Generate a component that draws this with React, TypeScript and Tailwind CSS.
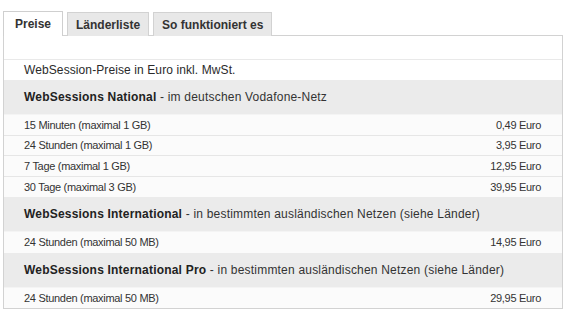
import React from "react";

type Row = { label: string; price: string };
type Group = { title: string; note: string; rows: Row[] };

const groups: Group[] = [
  {
    title: "WebSessions National",
    note: " - im deutschen Vodafone-Netz",
    rows: [
      { label: "15 Minuten (maximal 1 GB)", price: "0,49 Euro" },
      { label: "24 Stunden (maximal 1 GB)", price: "3,95 Euro" },
      { label: "7 Tage (maximal 1 GB)", price: "12,95 Euro" },
      { label: "30 Tage (maximal 3 GB)", price: "39,95 Euro" },
    ],
  },
  {
    title: "WebSessions International",
    note: " - in bestimmten ausländischen Netzen (siehe Länder)",
    rows: [{ label: "24 Stunden (maximal 50 MB)", price: "14,95 Euro" }],
  },
  {
    title: "WebSessions International Pro",
    note: " - in bestimmten ausländischen Netzen (siehe Länder)",
    rows: [{ label: "24 Stunden (maximal 50 MB)", price: "29,95 Euro" }],
  },
];

function Tab({ label, active }: { label: string; active?: boolean }) {
  return active ? (
    <div className="flex h-[25px] items-center border border-b-0 border-[#cfcfcf] bg-white px-[11px] pb-px text-[12px] font-bold text-[#333]">
      {label}
    </div>
  ) : (
    <div className="flex h-[24px] items-center border border-b-0 border-[#d2d2d2] bg-[#e8e8e8] px-[8px] text-[12px] font-bold text-[#333]">
      {label}
    </div>
  );
}

export default function App() {
  return (
    <div className="h-[319px] w-[567px] bg-white font-['Liberation_Sans',Arial,sans-serif] text-[#333]">
      <div className="pl-[3px] pr-[4px] pt-[11px]">
        <div className="relative z-10 -mb-px flex items-end gap-[4px]">
          <Tab label="Preise" active />
          <Tab label="Länderliste" />
          <Tab label="So funktioniert es" />
        </div>
        <div className="border border-[#d2d2d2] bg-white">
          <div className="h-[24px] border-b border-[#e9e9e9]" />
          <div className="flex h-[20px] items-center pl-[20px] text-[12px] tracking-[0.1px] text-[#2a2a2a]">
            WebSession-Preise in Euro inkl. MwSt.
          </div>
          {groups.map((g) => (
            <div key={g.title}>
              <div className="flex h-[35px] items-center border-b border-[#f4f4f4] bg-[#ebebeb] pl-[20px] text-[12px] tracking-[0.2px]">
                <span className="font-bold text-[#222]">{g.title}</span>
                <span className="whitespace-pre text-[#333]">{g.note}</span>
              </div>
              {g.rows.map((r, i) => (
                <div
                  key={r.label}
                  className={`flex h-[20.5px] items-center justify-between bg-[#fbfbfb] pl-[20px] pr-[21px] text-[11px] tracking-[-0.3px] text-[#333] ${
                    i < g.rows.length - 1 ? "border-b border-[#e6e6e6]" : ""
                  }`}
                >
                  <span>{r.label}</span>
                  <span>{r.price}</span>
                </div>
              ))}
            </div>
          ))}
        </div>
      </div>
    </div>
  );
}
